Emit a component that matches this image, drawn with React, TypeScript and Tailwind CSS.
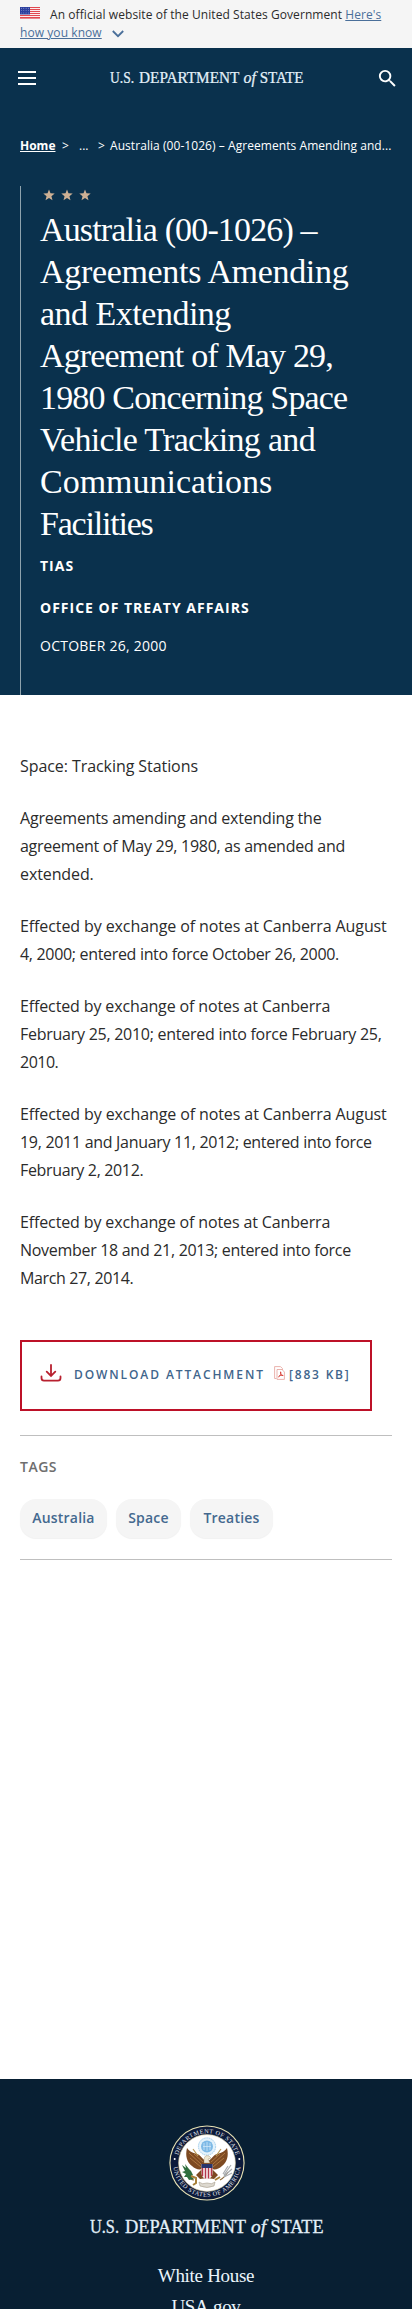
import React from "react";
import { MdSearch } from "react-icons/md";

const titleLines = [
  { text: "Australia (00-1026) –", spacing: "tracking-[-0.85px]" },
  { text: "Agreements Amending", spacing: "tracking-[-0.32px]" },
  { text: "and Extending", spacing: "tracking-[-0.5px]" },
  { text: "Agreement of May 29,", spacing: "tracking-[-0.84px]" },
  { text: "1980 Concerning Space", spacing: "tracking-[-0.83px]" },
  { text: "Vehicle Tracking and", spacing: "tracking-[-0.7px]" },
  { text: "Communications", spacing: "tracking-[0px]" },
  { text: "Facilities", spacing: "tracking-[-1.2px]" },
];

const paragraphs = [
  [{ text: "Space: Tracking Stations", spacing: "tracking-[-0.07px]" }],
  [
    { text: "Agreements amending and extending the", spacing: "tracking-[-0.2px]" },
    { text: "agreement of May 29, 1980, as amended and", spacing: "tracking-[-0.27px]" },
    { text: "extended.", spacing: "tracking-[-0.1px]" },
  ],
  [
    { text: "Effected by exchange of notes at Canberra August", spacing: "tracking-[-0.1px]" },
    { text: "4, 2000; entered into force October 26, 2000.", spacing: "tracking-[-0.32px]" },
  ],
  [
    { text: "Effected by exchange of notes at Canberra", spacing: "tracking-[-0.13px]" },
    { text: "February 25, 2010; entered into force February 25,", spacing: "tracking-[-0.26px]" },
    { text: "2010.", spacing: "tracking-[-0.5px]" },
  ],
  [
    { text: "Effected by exchange of notes at Canberra August", spacing: "tracking-[-0.1px]" },
    { text: "19, 2011 and January 11, 2012; entered into force", spacing: "tracking-[-0.3px]" },
    { text: "February 2, 2012.", spacing: "tracking-[-0.35px]" },
  ],
  [
    { text: "Effected by exchange of notes at Canberra", spacing: "tracking-[-0.13px]" },
    { text: "November 18 and 21, 2013; entered into force", spacing: "tracking-[-0.3px]" },
    { text: "March 27, 2014.", spacing: "tracking-[-0.36px]" },
  ],
];

function Flag() {
  return (
    <svg width="20" height="12" viewBox="0 0 20 12" className="mr-[10px] inline-block align-[0px]">
      <rect width="20" height="12" fill="#fff" />
      {[0, 2, 4, 6, 8, 10].map((y) => (
        <rect key={y} y={y} width="20" height="1.1" fill="#e0484f" />
      ))}
      <rect y="11.4" width="20" height=".6" fill="#e0484f" />
      <rect width="10" height="7.5" fill="#2c3f9e" />
      {[1.3, 3.6, 5.9].map((y) =>
        [1.5, 3.8, 6.1, 8.4].map((x) => <circle key={`${x}-${y}`} cx={x} cy={y} r=".45" fill="#c9d0ee" />),
      )}
    </svg>
  );
}

function Wordmark({ width }: { width: number }) {
  return (
    <svg width={width} height={(width * 24) / 234} viewBox="0 0 234 24" className="block overflow-visible">
      <g fill="#e3f0f9" stroke="#e3f0f9" strokeWidth=".3" fontFamily="'Liberation Serif', serif" fontSize="19.5">
        <text x="0" y="18" textLength="29" lengthAdjust="spacingAndGlyphs">U.S.</text>
        <text x="35" y="18" textLength="121" lengthAdjust="spacingAndGlyphs">DEPARTMENT</text>
        <text x="161" y="18" fontStyle="italic" textLength="15" lengthAdjust="spacingAndGlyphs">of</text>
        <text x="180.500" y="18" textLength="53" lengthAdjust="spacingAndGlyphs">STATE</text>
      </g>
    </svg>
  );
}

function Seal() {
  return (
    <svg width="76" height="76" viewBox="-38 -38 76 76" className="block">
      <defs>
        <path id="ringTop" d="M-29.800 0A29.800 29.800 0 0 1 29.800 0" />
        <path id="ringBottom" d="M-33.800 0A33.800 33.800 0 0 0 33.800 0" />
      </defs>
      <circle r="37.600" fill="#e9e3b4" />
      <circle r="36.500" fill="#0c1a3a" />
      <circle r="28.400" fill="#fff" stroke="#d8cfa0" strokeWidth=".6" />
      <g fill="#e8ebf0" fontFamily="'Liberation Serif', serif" fontSize="6.200">
        <text>
          <textPath href="#ringTop" startOffset="50%" textAnchor="middle" textLength="78">DEPARTMENT OF STATE</textPath>
        </text>
        <text>
          <textPath href="#ringBottom" startOffset="50%" textAnchor="middle" textLength="98">UNITED STATES OF AMERICA</textPath>
        </text>
      </g>
      <circle cx="-32.300" cy="-4" r="1" fill="#fff" />
      <circle cx="32.300" cy="-4" r="1" fill="#fff" />
      <circle cy="-16.500" r="8.600" fill="#e4f2fb" stroke="#9fcdec" strokeWidth="1" strokeDasharray="1.500 .7" />
      <circle cy="-16.500" r="6" fill="#7db9e6" />
      <path d="M-3-20v7M0-21v9M3-20v7M-4-16.500h8" stroke="#d9ecf9" strokeWidth=".7" />
      <path d="M-1-2C-5-4-6-8-10-9C-15-10-18-12-20-15C-22-7-20-1-15 3C-12 6-8 7-5 6L-11 12L-7 16L0 15L7 16L11 12L5 6C8 7 12 6 15 3C20-1 22-7 20-15C18-12 15-10 10-9C6-8 5-4 1-2Z" fill="#7d4a22" />
      <path d="M-18-10L-6 1M-17-5L-6 4M-13-9L-4-1M18-10L6 1M17-5L6 4M13-9L4-1" stroke="#b98248" strokeWidth=".8" />
      <path d="M-9-7L-14-14M9-7L14-14" stroke="#b99b5a" strokeWidth="1.200" />
      <path d="M-3-2C-3-7-1-8 2-7L4-5L1-4L3 0H-3Z" fill="#eee7d2" stroke="#9b845c" strokeWidth=".4" />
      <path d="M-5.500 1H5.500V11Q5 15 0 16.500Q-5 15-5.500 11Z" fill="#f5eeee" />
      <path d="M-4.500 5V13M-1.500 5V15.500M1.500 5V15.500M4.500 5V13" stroke="#b5364a" strokeWidth="1.400" />
      <path d="M-5.500 1H5.500V5H-5.500Z" fill="#28356c" />
      <path d="M-13 17Q-17 17-19 11M13 17Q17 15 21 9" fill="none" stroke="#8d6a3c" strokeWidth="1.200" />
      <path d="M-25 2L-21 5L-22 1L-18 6L-16 8L-14 12L-16 13L-13 16L-18 17L-20 14L-23 14L-21 11L-25 9L-22 8Z" fill="#2f6e3d" />
      <path d="M-16 13L-11 15L-11 20L-14 22M13 14L8 17" fill="none" stroke="#a88039" strokeWidth="2" />
      <path d="M24 2L17 12M25 6L17 13M21 3L16 11M25 10L17 14" stroke="#a9adb0" strokeWidth="1.200" />
      <path d="M-8 19Q-5 22 0 20Q5 22 8 19L7 23Q0 26-7 23Z" fill="#ddd9d0" stroke="#a59c8c" strokeWidth=".6" />
    </svg>
  );
}

function DownloadIcon() {
  return (
    <svg width="22" height="19" viewBox="0 0 22 19" fill="none" stroke="#b8202f" strokeWidth="1.800" strokeLinecap="round" className="mt-[21px] ml-[18px] block shrink-0">
      <path d="M11 2V12.500M6.700 8.700L11 13L15.300 8.700" />
      <path d="M1.500 13.500V15Q1.500 17.600 4 17.600H18Q20.500 17.600 20.500 15V13.500" />
    </svg>
  );
}

function PdfIcon() {
  return (
    <svg width="11" height="14" viewBox="0 0 11 14" fill="none" stroke="#e8aaa4" strokeWidth=".9" className="mt-[24px] block shrink-0">
      <path d="M2.500 12.500H.6V.6H6.500L8.500 2.600V4" />
      <path d="M3 3.500H8L10.400 6V13.400H3Z" />
      <path d="M4.500 10.800C7 9.500 7 7.500 6.600 5.800C6.300 8.500 7.500 9.500 9.200 9.500C7.500 9 5.500 9.500 4.500 10.800Z" stroke="#d63d36" />
    </svg>
  );
}

function Tag({ label, box }: { label: string; box: string }) {
  return (
    <a className={`flex h-[39px] items-center justify-center rounded-[16px] bg-[#f5f5f5] pb-[3px] text-[14px] font-semibold tracking-[0.2px] text-[#44698f] shadow-[0_1px_1px_rgba(0,0,0,0.06)] ${box}`}>
      {label}
    </a>
  );
}

export default function App() {
  return (
    <div className="flex h-[2309px] w-[412px] flex-col overflow-hidden bg-white font-['Open_Sans',sans-serif] text-[#2b2b2b]">
      <div className="h-[48px] shrink-0 bg-[#f5f5f5] pt-[6px] pl-5 text-[12px] leading-[18px] tracking-[0.07px] whitespace-nowrap">
        <div>
          <Flag />
          <span>An official website of the United States Government </span>
          <a className="text-[#4a6f9a] underline">Here's</a>
        </div>
        <div className="flex">
          <a className="text-[#4a6f9a] underline">how you know</a>
          <svg width="12" height="8" viewBox="0 0 12 8" fill="none" stroke="#4a6f9a" strokeWidth="1.800" className="mt-[6px] ml-[10px]">
            <path d="M.8 1L6 6.200L11.200 1" />
          </svg>
        </div>
      </div>

      <div className="flex h-[647px] shrink-0 flex-col bg-[#0a314d] text-white">
        <header className="flex h-[60px] shrink-0 items-center justify-between pr-[13px] pl-[18px]">
          <div className="flex w-[18px] flex-col gap-[4px]">
            <span className="h-[2px] bg-white" />
            <span className="h-[2px] bg-white" />
            <span className="h-[2px] bg-white" />
          </div>
          <div className="ml-[2px]">
            <Wordmark width={194} />
          </div>
          <MdSearch size={23} />
        </header>

        <nav className="mt-[29px] flex h-[18px] shrink-0 pl-5 text-[12px] leading-[18px] whitespace-nowrap">
          <a className="w-[42px] font-bold"><span className="underline">Home</span></a>
          <span className="w-[17px]">&gt;</span>
          <span className="w-[19px]">...</span>
          <span className="w-[12px]">&gt;</span>
          <span className="tracking-[0.06px]">Australia (00-1026) – Agreements Amending and...</span>
        </nav>

        <div className="mt-[31px] ml-5 flex flex-1 flex-col border-l border-[#8fa3ad] pl-[19px]">
          <div className="flex h-[23px] gap-[6px] pt-[3px] pl-[3px]">
            {[0, 1, 2].map((i) => (
              <svg key={i} width="12" height="12" viewBox="0 0 24 24" fill="#cdb094" className="block">
                <path d="M12 1L15 8.700L23.400 9.200L16.900 14.500L19 22.700L12 18.200L5 22.700L7.100 14.500L.6 9.200L9 8.700Z" />
              </svg>
            ))}
          </div>
          <h1 className="font-['Liberation_Serif',serif] text-[34px] leading-[42px] font-normal whitespace-nowrap">
            {titleLines.map((l) => (
              <span key={l.text} className={`block ${l.spacing}`}>{l.text}</span>
            ))}
          </h1>
          <p className="mt-[11px] text-[14px] leading-[20px] font-bold tracking-[1px]">TIAS</p>
          <p className="mt-[22px] text-[14px] leading-[20px] font-bold tracking-[1px]">OFFICE OF TREATY AFFAIRS</p>
          <p className="mt-[18px] text-[14px] leading-[20px] tracking-[0.25px]">OCTOBER 26, 2000</p>
        </div>
      </div>

      <main className="flex flex-col px-5 pt-[57px]">
        <div className="flex flex-col gap-6 text-[16px] leading-[28px] whitespace-nowrap">
          {paragraphs.map((lines, i) => (
            <p key={i}>
              {lines.map((l) => (
                <span key={l.text} className={`block ${l.spacing}`}>{l.text}</span>
              ))}
            </p>
          ))}
        </div>

        <a className="mt-[48px] flex h-[71px] w-[352px] border-2 border-[#bd1128] text-[12px] leading-[18px] font-semibold whitespace-nowrap text-[#3f658c]">
          <DownloadIcon />
          <span className="mt-[24px] ml-[12px] w-[200px] tracking-[1.9px]">DOWNLOAD ATTACHMENT</span>
          <PdfIcon />
          <span className="mt-[24px] ml-[4px] tracking-[1.8px]">[883 KB]</span>
        </a>

        <section className="mt-[24px] flex h-[125px] flex-col border-y border-[#bfbfbf]">
          <h2 className="mt-[21px] text-[14px] leading-[20px] font-semibold tracking-[0.5px] text-[#6e6e6e]">TAGS</h2>
          <div className="mt-[22px] flex gap-[9px]">
            <Tag label="Australia" box="w-[87px]" />
            <Tag label="Space" box="w-[65px]" />
            <Tag label="Treaties" box="w-[83px]" />
          </div>
        </section>
      </main>

      <footer className="mt-auto flex h-[230px] shrink-0 flex-col items-center bg-[#081f33] pt-[46px] text-[#eaf4fb]">
        <div className="ml-[2px]"><Seal /></div>
        <div className="mt-[14px] ml-[1px]"><Wordmark width={234} /></div>
        <div className="mt-[21px] flex flex-col items-center font-['Liberation_Serif',serif] text-[19px] leading-[31px] whitespace-nowrap">
          <a className="tracking-[-0.3px]">White House</a>
          <a className="tracking-[-0.3px]">USA.gov</a>
        </div>
      </footer>
    </div>
  );
}
